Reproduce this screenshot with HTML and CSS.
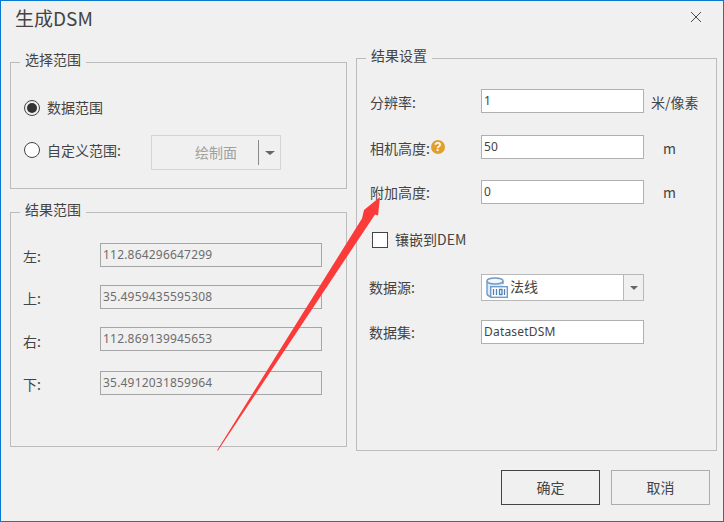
FILE: index.html
```html
<!DOCTYPE html>
<html lang="zh">
<head>
<meta charset="utf-8">
<title>生成DSM</title>
<link rel="stylesheet" href="styles.css">
</head>
<body>
<div class="dialog">
  <header class="titlebar">
    <h1 class="title">生成DSM</h1>
    <svg class="close" width="12" height="12" viewBox="0 0 12 12"><path d="M1 1l10 10M11 1L1 11" stroke="#4a4a4a" stroke-width="1" fill="none"/></svg>
  </header>
  <main class="content">
    <div class="col-left">
      <fieldset class="group group-select">
        <legend>选择范围</legend>
        <div class="radio-row">
          <span class="radio checked"></span><span class="radio-label lift">数据范围</span>
        </div>
        <div class="radio-row second">
          <span class="radio"></span><span class="radio-label wide">自定义范围:</span>
          <div class="draw-btn"><span class="draw-text">绘制面</span><span class="draw-sep"></span><span class="caret"></span></div>
        </div>
      </fieldset>
      <fieldset class="group group-result">
        <legend>结果范围</legend>
        <div class="range-row"><label>左:</label><div class="ro-input">112.864296647299</div></div>
        <div class="range-row"><label>上:</label><div class="ro-input">35.4959435595308</div></div>
        <div class="range-row"><label>右:</label><div class="ro-input">112.869139945653</div></div>
        <div class="range-row"><label>下:</label><div class="ro-input">35.4912031859964</div></div>
      </fieldset>
    </div>
    <fieldset class="group group-settings">
      <legend>结果设置</legend>
      <div class="set-row r1"><label>分辨率:</label><div class="input">1</div><span class="unit">米/像素</span></div>
      <div class="set-row r2"><label>相机高度:<span class="help">?</span></label><div class="input">50</div><span class="unit m">m</span></div>
      <div class="set-row r3"><label>附加高度:</label><div class="input">0</div><span class="unit m">m</span></div>
      <div class="check-row"><span class="checkbox"></span><span class="lift">镶嵌到DEM</span></div>
      <div class="set-row r5"><label>数据源:</label>
        <div class="combo">
          <svg class="db" width="22" height="21" viewBox="0 0 22 21" fill="none">
            <path d="M1 4v15h4V9.500h12V4z" fill="#dfeaf5"/>
            <path d="M1 4v12.500c0 1.500 1.500 2.500 3 3M17 4v3" stroke="#6f9cc8" stroke-width="1.400"/>
            <ellipse cx="9" cy="4" rx="8" ry="3" fill="#f4f8fc" stroke="#6f9cc8" stroke-width="1.400"/>
            <rect x="4.700" y="9.700" width="16.600" height="10.600" fill="#fff" stroke="#6f9cc8" stroke-width="1.400"/>
            <path d="M7.500 12v6M10.500 12v6M13.500 12.500h2.500v5h-2.500zM18.500 12v6" stroke="#4f82b6" stroke-width="1.300"/>
          </svg>
          <span class="combo-text">法线</span>
          <span class="combo-arrow"><span class="caret small"></span></span>
        </div>
      </div>
      <div class="set-row r6"><label>数据集:</label><div class="input">DatasetDSM</div></div>
    </fieldset>
  </main>
  <footer class="buttons">
    <button class="btn primary">确定</button>
    <button class="btn">取消</button>
  </footer>
  <svg class="arrow" width="724" height="522" viewBox="0 0 724 522"><polygon points="217,450.500 362,218.500 364,210 380,197 378,215.500 375,214.500 218,450.500" fill="#fb3a3a"/></svg>
</div>
</body>
</html>
```
FILE: styles.css
```css
* { box-sizing: border-box; }
html, body { margin: 0; padding: 0; background: #f0f0f0; }
body { font-family: "Noto Sans CJK SC", "Liberation Sans", sans-serif; font-size: 14px; color: #444; }
.dialog { position: relative; width: 724px; height: 522px; background: #f0f0f0; border: 1px solid #0a78d0; overflow: hidden; display: flex; flex-direction: column; }
.titlebar { height: 38px; display: flex; align-items: center; justify-content: space-between; padding: 0 21px 0 14px; flex: none; }
.title { margin: -4px 0 0; font-size: 19px; font-weight: 400; color: #444; line-height: 36px; }
.close { margin-top: -6px; }
.content { display: flex; align-items: flex-start; padding: 0 0 0 9px; gap: 9px; flex: none; }
.col-left { width: 337px; display: flex; flex-direction: column; padding-top: 14px; gap: 14px; }
fieldset.group { margin: 0; padding: 0; border: 1px solid #bcbcbc; min-width: 0; position: relative; }
legend { margin-left: -4px; padding: 0 5px; font-size: 14px; line-height: 12px; color: #444; height: 18px; }
.group-select { height: 136px; padding: 0 0 0 13px !important; }
.group-result { height: 244px; padding: 0 0 0 12px !important; }
.group-result legend { margin-left: -3px; }
.group-settings { width: 361px; height: 402px; margin-top: 10px !important; padding: 0 0 0 13px !important; }
.radio-row { display: flex; align-items: center; height: 20px; margin-top: 27px; }
.radio-row.second { margin-top: 22px; }
.lift { padding-bottom: 2px; }
.radio { width: 16px; height: 16px; border-radius: 50%; border: 1px solid #444; background: #fff; flex: none; position: relative; margin-right: 7px; }
.radio.checked { background: #f0f0f0; }
.radio.checked::after { content: ""; position: absolute; left: 2px; top: 2px; width: 10px; height: 10px; border-radius: 50%; background: #333; }
.radio-label.wide { width: 104px; flex: none; }
.draw-btn { width: 130px; height: 35px; border: 1px solid #d4d4d4; display: flex; align-items: center; flex: none; margin-top: 5px; color: #a0a0a0; }
.draw-text { width: 106px; text-align: center; padding-left: 22px; padding-bottom: 2px; }
.draw-sep { width: 1px; height: 25px; background: #8a8a8a; margin-right: 6px; }
.caret { display: block; width: 0; height: 0; border-left: 5px solid transparent; border-right: 5px solid transparent; border-top: 4px solid #666; }
.caret.small { border-left-width: 4px; border-right-width: 4px; }
.range-row { display: flex; align-items: center; height: 24px; margin-bottom: 18px; }
.range-row:first-of-type { margin-top: 22px; }
.range-row:nth-of-type(3) { margin-bottom: 20px; }
.range-row label { width: 77px; flex: none; padding-top: 1px; }
.range-row:nth-of-type(3) label { padding-top: 3px; }
.ro-input { width: 222px; height: 24px; border: 1px solid #a6a6a6; background: #f0f0f0; color: #6d6d6d; font-family: "Noto Sans", sans-serif; font-size: 12px; line-height: 20px; padding: 1px 0 0 2px; letter-spacing: 0.2px; }
.set-row { display: flex; align-items: center; height: 24px; }
.set-row label { width: 111px; flex: none; display: flex; align-items: center; padding-top: 2px; }
.set-row.r1 { margin-top: 22px; }
.set-row.r2 { margin-top: 22px; }
.set-row.r3 { margin-top: 21px; }
.set-row.r3 label { padding-top: 0; }
.set-row.r3 .unit.m { padding-top: 0; }
.input { width: 163px; height: 24px; border: 1px solid #b0b0b0; background: #fff; color: #444; font-family: "Noto Sans", sans-serif; font-size: 12px; line-height: 20px; padding: 1px 0 0 2px; flex: none; letter-spacing: 0.2px; }
.unit { margin-left: 7px; padding-top: 2px; }
.unit.m { margin-left: 19px; padding-top: 1px; }
.help { display: inline-block; width: 14px; height: 14px; border-radius: 50%; background: #e0a030; color: #fff; font-family: "Liberation Sans", sans-serif; font-size: 12px; font-weight: 700; line-height: 14px; text-align: center; margin: -2px 0 0 1px; }
.check-row { display: flex; align-items: center; height: 20px; margin-top: 26px; margin-left: 2px; gap: 7px; }
.checkbox { width: 16px; height: 16px; border: 1px solid #444; background: #fff; flex: none; }
.set-row.r5 { height: 27px; margin-top: 24px; }
.set-row.r6 { margin-top: 19px; }
.set-row.r5 label, .set-row.r6 label { margin-left: -1px; width: 112px; padding-top: 0; }
.set-row.r5 label { padding-bottom: 2px; }
.combo { width: 163px; height: 27px; border: 1px solid #b8b8b8; background: #fff; display: flex; align-items: center; flex: none; }
.db { margin-left: 4px; flex: none; }
.combo-text { margin-left: 2px; flex: 1; padding-bottom: 3px; }
.combo-arrow { width: 20px; height: 25px; background: #f0f0f0; border-left: 1px solid #b8b8b8; display: flex; align-items: center; justify-content: center; }
.buttons { display: flex; justify-content: flex-end; gap: 11px; padding-top: 19px; margin-right: 13px; }
.btn { width: 99px; height: 35px; border: 1px solid #adadad; background: #f0f0f0; font-family: inherit; font-size: 14px; color: #444; padding: 0 0 2px; }
.btn.primary { border-color: #444; }
.arrow { position: absolute; left: -1px; top: -1px; pointer-events: none; }
```
